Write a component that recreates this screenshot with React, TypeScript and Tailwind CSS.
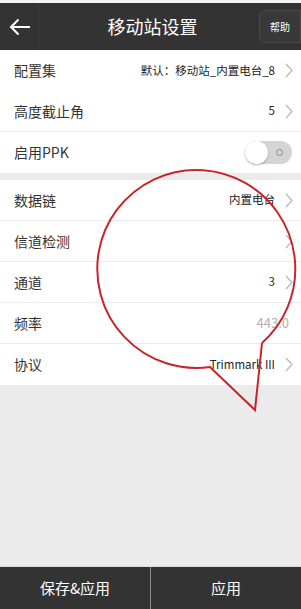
import React from "react";

const font = { fontFamily: '"Noto Sans CJK SC", "Noto Sans", sans-serif' };

function Chevron() {
  return (
    <svg width="8" height="15" viewBox="0 0 8 15" className="ml-[10px] shrink-0">
      <path d="M1 1 L7 7.5 L1 14" fill="none" stroke="#b5b5b5" strokeWidth="1.2" />
    </svg>
  );
}

function Row({ label, value, chevron = true, gray = false, border = true }: { label: string; value?: string; chevron?: boolean; gray?: boolean; border?: boolean }) {
  return (
    <div className={`h-[41px] flex items-center pl-[14px] pr-[8px] bg-white ${border ? "border-b border-[#ececec]" : ""}`}>
      <span className="text-[14px] text-[#333333] flex-1">{label}</span>
      {value && (
        <span className={gray ? "text-[13px] text-[#b0b0b0] mr-[4px]" : "text-[11.5px] text-[#222222]"}>{value}</span>
      )}
      {chevron && <Chevron />}
    </div>
  );
}

export default function App() {
  return (
    <div className="w-[301px] h-[609px] bg-[#ebebeb] flex flex-col relative overflow-hidden" style={font}>
      <div className="h-[3px] bg-[#f3f3f3]" />
      <div className="h-[47px] bg-[#333333] flex items-center relative">
        <div className="w-[40px] h-full flex items-center justify-center border-r border-[#3a3a3a]">
          <svg width="22" height="18" viewBox="0 0 22 18">
            <path d="M21 9 H2 M9.5 1.5 L2 9 L9.5 16.5" fill="none" stroke="#ffffff" strokeWidth="2" />
          </svg>
        </div>
        <div className="flex-1 text-center text-white text-[18px] pl-[6px]">移动站设置</div>
        <div className="w-[42px] h-[33px] mr-0 rounded-l-[6px] border border-[#4a4a4a] bg-[#393939] flex items-center justify-center text-white text-[10px]">
          帮助
        </div>
      </div>

      <div className="flex flex-col">
        <Row label="配置集" value="默认：移动站_内置电台_8" border={false} />
        <Row label="高度截止角" value="5" />
        <div className="h-[41px] flex items-center pl-[14px] pr-[9px] bg-white">
          <span className="text-[14px] text-[#333333] flex-1">启用PPK</span>
          <div className="w-[47px] h-[23px] rounded-full bg-[#d4d4d4] relative">
            <div className="absolute left-0 top-0 w-[23px] h-[23px] rounded-full bg-white shadow-[0_1px_2px_rgba(0,0,0,0.3)]" />
            <div className="absolute right-[9px] top-[8px] w-[7px] h-[7px] rounded-full border border-[#8a8a8a]" />
          </div>
        </div>
      </div>

      <div className="h-[7px]" />

      <div className="flex flex-col">
        <Row label="数据链" value="内置电台" />
        <Row label="信道检测" />
        <Row label="通道" value="3" />
        <Row label="频率" value="443.0" chevron={false} gray />
        <Row label="协议" value="Trimmark III" border={false} />
      </div>

      <div className="flex-1" />

      <div className="h-[43px] bg-[#333333] border-t border-[#dcdcdc] flex">
        <div className="w-[151px] flex items-center justify-center text-white text-[15px] border-r border-[#8a8a8a]">保存&amp;应用</div>
        <div className="flex-1 flex items-center justify-center text-white text-[15px]">应用</div>
      </div>

      <svg className="absolute left-0 top-0 pointer-events-none" width="301" height="609" viewBox="0 0 301 609">
        <path
          d="M262 343 L255 410 L210 367 A99 99 0 1 1 262 343"
          fill="none"
          stroke="#c8252b"
          strokeWidth="2"
          strokeLinejoin="miter"
        />
      </svg>
    </div>
  );
}
